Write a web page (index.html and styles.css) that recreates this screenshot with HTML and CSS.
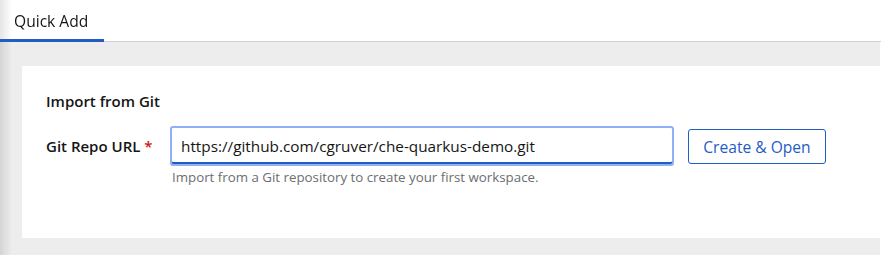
FILE: index.html
```html
<!DOCTYPE html>
<html lang="en">
<head>
  <meta charset="UTF-8">
  <meta name="viewport" content="width=device-width, initial-scale=1.0">
  <title>Quick Add</title>
  <link rel="stylesheet" href="styles.css">
</head>
<body>
  <div class="shade"></div>
  <div class="tabs">
    <div class="tab active">Quick Add</div>
  </div>

  <div class="main">
    <div class="card">
      <div class="card-title">Import from Git</div>

      <div class="form-row">
        <label for="repo" class="label">Git Repo URL <span class="req">*</span></label>
        <div class="field">
          <input type="text" id="repo" class="input" value="https://github.com/cgruver/che-quarkus-demo.git">
          <div class="helper">Import from a Git repository to create your first workspace.</div>
        </div>
        <button class="btn">Create &amp; Open</button>
      </div>
    </div>
  </div>
</body>
</html>
```

FILE: styles.css
```css
body {
  margin: 0;
  font-family: "Open Sans", "Noto Sans", sans-serif;
  color: #151515;
  background-color: white;
}
.shade {
  position: fixed;
  left: 0;
  top: 0;
  bottom: 0;
  width: 12px;
  background: linear-gradient(to right, rgba(0,0,0,0.1), rgba(0,0,0,0));
  pointer-events: none;
}
.tabs {
  display: flex;
  height: 41px;
  border-bottom: 1px solid #d2d2d2;
}
.tab {
  position: relative;
  width: 104px;
  box-sizing: border-box;
  padding: 10px 0 0 14px;
  font-size: 15.6px;
}
.tab.active::after {
  content: "";
  position: absolute;
  left: 0;
  right: 0;
  bottom: -1px;
  height: 3px;
  background-color: #1f5dc2;
}
.main {
  background-color: #ededed;
  margin-right: 1px;
  padding: 24px 0 17px 22px;
}
.card {
  background-color: white;
  height: 172px;
  box-sizing: border-box;
  padding: 24px 24px 0 24px;
}
.card-title {
  font-size: 15px;
  font-weight: 600;
  line-height: 22px;
}
.form-row {
  display: flex;
  align-items: flex-start;
  margin-top: 14px;
}
.label {
  width: 124px;
  font-size: 15px;
  font-weight: 600;
  line-height: 20px;
  padding-top: 10px;
}
.req {
  color: #c9190b;
}
.field {
  width: 504px;
}
.input {
  display: block;
  width: 100%;
  height: 40px;
  box-sizing: border-box;
  margin: 0;
  padding: 0 9px 1px 9px;
  font-family: inherit;
  font-size: 15.3px;
  color: #151515;
  border: 2px solid #8fb0f3;
  border-radius: 3px;
  box-shadow: inset 0 -2px 0 #1f5dc2;
  outline: none;
}
.helper {
  margin-top: 2px;
  padding-left: 2px;
  font-size: 13.3px;
  line-height: 18px;
  color: #6a6e73;
}
.btn {
  margin-left: 14px;
  margin-top: 3px;
  width: 138px;
  height: 35px;
  background-color: white;
  border: 1px solid #1f5dc2;
  border-radius: 3px;
  color: #1f5dc2;
  font-family: inherit;
  font-size: 15.6px;
}
```
